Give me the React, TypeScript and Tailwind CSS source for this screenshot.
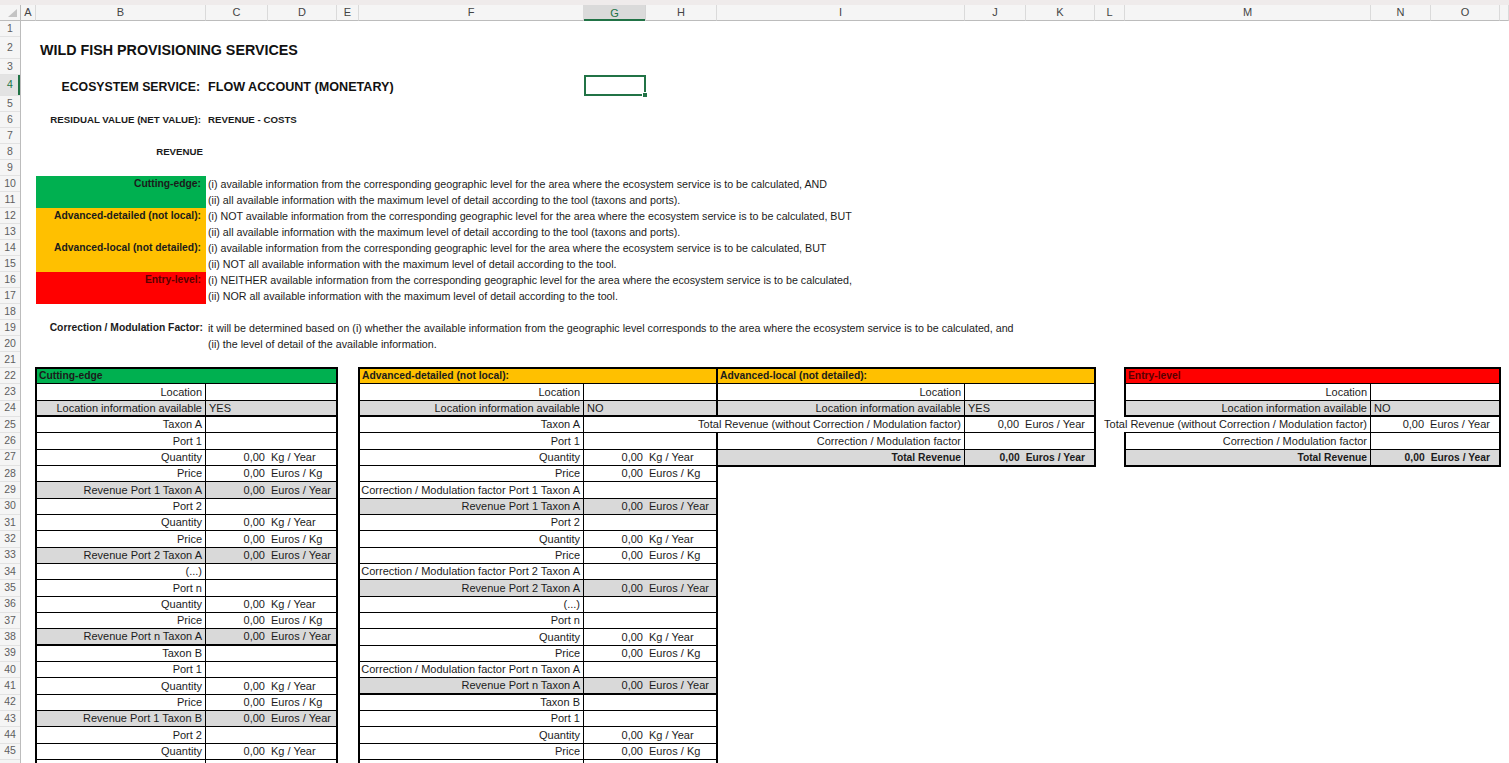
import React from "react";

type Line = {
  label: string;
  num?: string;
  unit?: string;
  text?: string;
  sum?: boolean;
  spill?: boolean;
  gray?: boolean;
  bold?: boolean;
  thick?: boolean;
};

const LETTERS = ["A", "B", "C", "D", "E", "F", "G", "H", "I", "J", "K", "L", "M", "N", "O", ""];

const qty: Line = { label: "Quantity", num: "0,00", unit: "Kg / Year" };
const price: Line = { label: "Price", num: "0,00", unit: "Euros / Kg" };
const rev = (label: string, thick = false): Line => ({ label, num: "0,00", unit: "Euros / Year", gray: true, thick });
const corr = (label: string): Line => ({ label });
// last sheet row only peeks in at the bottom edge
const blank: Line = { label: "" };

const cuttingEdge: Line[] = [
  { label: "Location" },
  { label: "Location information available", text: "YES", gray: true, thick: true },
  { label: "Taxon A" },
  { label: "Port 1" },
  qty,
  price,
  rev("Revenue Port 1 Taxon A"),
  { label: "Port 2" },
  qty,
  price,
  rev("Revenue Port 2 Taxon A"),
  { label: "(...)" },
  { label: "Port n" },
  qty,
  price,
  rev("Revenue Port n Taxon A", true),
  { label: "Taxon B" },
  { label: "Port 1" },
  qty,
  price,
  rev("Revenue Port 1 Taxon B"),
  { label: "Port 2" },
  qty,
  blank,
];

const advancedDetailed: Line[] = [
  { label: "Location" },
  { label: "Location information available", text: "NO", gray: true, thick: true },
  { label: "Taxon A" },
  { label: "Port 1" },
  qty,
  price,
  corr("Correction / Modulation factor Port 1 Taxon A"),
  rev("Revenue Port 1 Taxon A"),
  { label: "Port 2" },
  qty,
  price,
  corr("Correction / Modulation factor Port 2 Taxon A"),
  rev("Revenue Port 2 Taxon A"),
  { label: "(...)" },
  { label: "Port n" },
  qty,
  price,
  corr("Correction / Modulation factor Port n Taxon A"),
  rev("Revenue Port n Taxon A", true),
  { label: "Taxon B" },
  { label: "Port 1" },
  qty,
  price,
  blank,
];

const summary = (available: string): Line[] => [
  { label: "Location" },
  { label: "Location information available", text: available, gray: true, thick: true },
  { label: "Total Revenue (without Correction / Modulation factor)", num: "0,00", unit: "Euros / Year", sum: true, spill: true },
  { label: "Correction / Modulation factor" },
  { label: "Total Revenue", num: "0,00", unit: "Euros / Year", sum: true, gray: true, bold: true },
];

function Row({ l }: { l: Line }) {
  const shade = l.gray ? "bg-[#d9d9d9]" : "bg-transparent";
  const bb = l.thick ? "border-b-2" : "border-b";
  const weight = l.bold ? "font-bold text-[10.3px]" : "";
  return (
    <>
      {l.spill ? (
        <div className={`flex items-stretch justify-end whitespace-nowrap border-r border-black ${bb}`}>
          <span className="relative z-10 flex items-center bg-white pl-[1px] pr-[3px]">{l.label}</span>
        </div>
      ) : (
        <div className={`flex items-center justify-end whitespace-nowrap pr-[3px] border-r border-black ${bb} ${shade} ${weight}`}>
          {l.label}
        </div>
      )}
      {l.num && !l.sum ? (
        <>
          <div className={`flex items-center justify-end pr-[3px] border-black ${bb} ${shade}`}>{l.num}</div>
          <div className={`flex items-center whitespace-nowrap pl-[3px] border-black ${bb} ${shade}`}>{l.unit}</div>
        </>
      ) : l.sum ? (
        <div className={`col-span-2 flex items-center justify-end whitespace-nowrap pr-[10px] border-black ${bb} ${shade} ${weight}`}>
          <span>{l.num}</span>
          <span className="ml-[6px]">{l.unit}</span>
        </div>
      ) : (
        <div className={`col-span-2 flex items-center pl-[3px] border-black ${bb} ${shade}`}>{l.text}</div>
      )}
    </>
  );
}

function Table({ place, cols, title, head, lines }: { place: string; cols: string; title: string; head: string; lines: Line[] }) {
  return (
    <div className={`${place} grid ${cols} auto-rows-[16.33px] outline-2 outline-black -outline-offset-1`}>
      <div className={`col-span-3 flex items-center pl-[3px] font-bold text-[10.3px] border-b border-black ${head}`}>{title}</div>
      {lines.map((l, i) => (
        <Row key={i} l={l} />
      ))}
    </div>
  );
}

function RowNumbers() {
  const nums = Array.from({ length: 46 }, (_, i) => i + 1);
  return (
    <div className="col-start-1 row-start-2 row-span-46 grid grid-rows-[16px_22px_16px_21px_repeat(17,16px)_repeat(25,16.33px)] bg-[#f5f5f5] border-r border-[#bcbcbc]">
      {nums.map((n) =>
        n === 4 ? (
          <div key={n} className="flex items-center justify-center border-b border-[#e2e2e2] bg-[#e3e3e3] text-[10.5px] text-[#217346] shadow-[inset_-2px_0_0_#217346]">
            {n}
          </div>
        ) : (
          <div key={n} className="flex items-center justify-center border-b border-[#e2e2e2] text-[10.5px] text-[#5e5e5e]">
            {n < 46 ? n : ""}
          </div>
        )
      )}
    </div>
  );
}

const legend = [
  "(i) available information from the corresponding geographic level for the area where the ecosystem service is to be calculated, AND",
  "(ii) all available information with the maximum level of detail according to the tool (taxons and ports).",
  "(i) NOT available information from the corresponding geographic level for the area where the ecosystem service is to be calculated, BUT",
  "(ii) all available information with the maximum level of detail according to the tool (taxons and ports).",
  "(i) available information from the corresponding geographic level for the area where the ecosystem service is to be calculated, BUT",
  "(ii) NOT all available information with the maximum level of detail according to the tool.",
  "(i) NEITHER available information from the corresponding geographic level for the area where the ecosystem service is to be calculated,",
  "(ii) NOR all available information with the maximum level of detail according to the tool.",
];

export default function App() {
  return (
    <div className="h-screen w-full overflow-hidden bg-white font-['Liberation_Sans',Arial,sans-serif] text-[11px] text-[#1b1b1b]">
      <div className="h-[5px] bg-[#efebeb]" />
      <div className="grid grid-cols-[21px_15px_170px_62px_69px_22px_225px_62px_71px_248px_61px_69px_30px_246px_60px_69px_1fr] grid-rows-[16px_16px_22px_16px_21px_repeat(17,16px)_repeat(25,16.33px)]">
        {/* corner */}
        <div className="col-start-1 row-start-1 flex items-end justify-end bg-[#f5f5f5] border-b border-r border-[#bcbcbc] pb-[3px] pr-[3px]">
          <svg width="9" height="8" viewBox="0 0 9 8">
            <polygon points="9,0 9,8 0,8" fill="#c4c4c4" />
          </svg>
        </div>
        {/* column letters */}
        {LETTERS.map((c, i) =>
          c === "G" ? (
            <div key={i} className="row-start-1 flex items-center justify-center bg-[#dadada] border-r border-[#d4d4d4] shadow-[inset_0_-2px_0_#217346] text-[11px] text-[#217346]">
              {c}
            </div>
          ) : (
            <div key={i} className="row-start-1 flex items-center justify-center bg-[#f5f5f5] border-r border-b border-r-[#dadada] border-b-[#bcbcbc] text-[11px] text-[#444]">
              {c}
            </div>
          )
        )}
        <RowNumbers />

        {/* heading block */}
        <div className="col-start-3 col-span-8 row-start-3 flex items-center pl-[4px] pt-[5px] whitespace-nowrap font-bold text-[14.3px] text-[#111]">
          WILD FISH PROVISIONING SERVICES
        </div>
        <div className="col-start-3 row-start-5 flex items-center justify-end pr-[6px] pt-[3px] whitespace-nowrap font-bold text-[12.3px] text-[#111]">
          ECOSYSTEM SERVICE:
        </div>
        <div className="col-start-4 col-span-4 row-start-5 flex items-center pl-[2px] pt-[3px] whitespace-nowrap font-bold text-[12.6px] text-[#111]">
          FLOW ACCOUNT (MONETARY)
        </div>
        <div className="col-start-8 row-start-5 relative border-2 border-[#217346]">
          <div className="absolute -right-[4px] -bottom-[4px] h-[6px] w-[6px] bg-[#217346] border border-white" />
        </div>
        <div className="col-start-3 row-start-7 flex items-center justify-end pr-[5px] whitespace-nowrap font-bold text-[9.7px]">
          RESIDUAL VALUE (NET VALUE):
        </div>
        <div className="col-start-4 col-span-3 row-start-7 flex items-center pl-[2px] whitespace-nowrap font-bold text-[9.7px]">
          REVENUE - COSTS
        </div>
        <div className="col-start-3 row-start-9 flex items-center justify-end pr-[3px] font-bold text-[9.7px]">REVENUE</div>

        {/* levels legend */}
        <div className="col-start-3 col-span-14 row-start-11 row-span-8 grid grid-cols-[170px_1fr] grid-rows-[repeat(8,16px)]">
          <div className="col-start-1 row-start-1 row-span-2 bg-[#00b050]">
            <div className="flex h-[16px] items-center justify-end pr-[5px] font-bold text-[10.3px]">Cutting-edge:</div>
          </div>
          <div className="col-start-1 row-start-3 row-span-4 bg-[#ffc000]">
            <div className="flex h-[16px] items-center justify-end pr-[5px] font-bold text-[10.3px]">Advanced-detailed (not local):</div>
            <div className="h-[16px]" />
            <div className="flex h-[16px] items-center justify-end pr-[5px] font-bold text-[10.3px]">Advanced-local (not detailed):</div>
          </div>
          <div className="col-start-1 row-start-7 row-span-2 bg-[#ff0000]">
            <div className="flex h-[16px] items-center justify-end pr-[5px] font-bold text-[10.3px] text-[#5a0000]">Entry-level:</div>
          </div>
          {legend.map((t, i) => (
            <div key={i} className="col-start-2 flex items-center pl-[2px] whitespace-nowrap text-[10.7px]">
              {t}
            </div>
          ))}
        </div>

        <div className="col-start-3 col-span-14 row-start-20 row-span-2 grid grid-cols-[170px_1fr] grid-rows-[16px_16px]">
          <div className="flex items-center justify-end pr-[3px] whitespace-nowrap font-bold text-[10.3px]">Correction / Modulation Factor:</div>
          <div className="flex items-center pl-[2px] whitespace-nowrap text-[10.7px]">
            it will be determined based on (i) whether the available information from the geographic level corresponds to the area where the ecosystem service is to be calculated, and
          </div>
          <div className="col-start-2 flex items-center pl-[2px] whitespace-nowrap text-[10.7px]">(ii) the level of detail of the available information.</div>
        </div>

        {/* calculation tables */}
        <Table
          place="col-start-3 col-span-3 row-start-23 row-span-25"
          cols="grid-cols-[170px_62px_1fr]"
          title="Cutting-edge"
          head="bg-[#00b050]"
          lines={cuttingEdge}
        />
        <Table
          place="col-start-7 col-span-3 row-start-23 row-span-25"
          cols="grid-cols-[225px_62px_1fr]"
          title="Advanced-detailed (not local):"
          head="bg-[#ffc000]"
          lines={advancedDetailed}
        />
        <Table
          place="col-start-10 col-span-3 row-start-23 row-span-6"
          cols="grid-cols-[248px_61px_1fr]"
          title="Advanced-local (not detailed):"
          head="bg-[#ffc000]"
          lines={summary("YES")}
        />
        <Table
          place="col-start-14 col-span-3 row-start-23 row-span-6"
          cols="grid-cols-[246px_60px_1fr]"
          title="Entry-level"
          head="bg-[#ff0000] text-[#5a0000]"
          lines={summary("NO")}
        />
      </div>
    </div>
  );
}
